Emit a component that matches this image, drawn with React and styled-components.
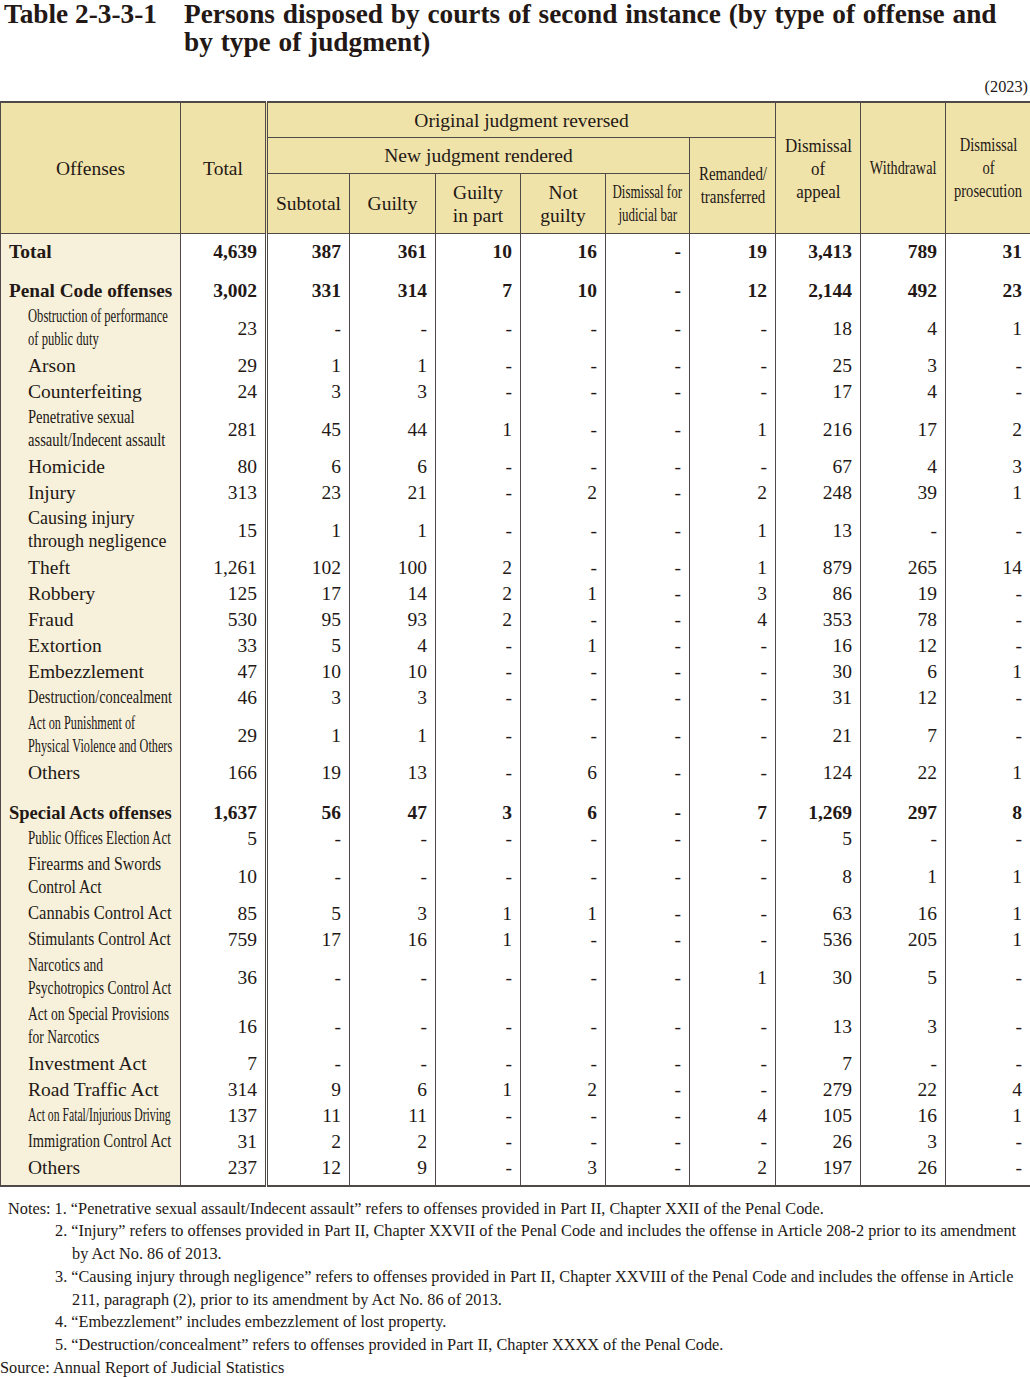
import React from 'react';
import styled, { createGlobalStyle } from 'styled-components';

const GlobalStyle = createGlobalStyle`
  html, body {
    margin: 0;
    padding: 0;
    background: #fff;
  }
  body {
    font-family: "Liberation Serif", "Times New Roman", serif;
    color: #231815;
  }
`;

const LINE = '#4f4a47';

const Page = styled.div`
  width: 1030px;
`;

const TitleRow = styled.div`
  display: flex;
  font-size: 27.3px;
  font-weight: bold;
  line-height: 28px;
  word-spacing: 1px;
  white-space: nowrap;
`;

const TitleNo = styled.div`
  width: 184px;
  flex-shrink: 0;
  padding-left: 4px;
  box-sizing: border-box;
  word-spacing: 0;
`;

const Year = styled.div`
  text-align: right;
  font-size: 16.3px;
  line-height: 20px;
  padding: 21px 2px 0 0;
  margin-bottom: 4px;
`;

const Grid = styled.table`
  width: 1030px;
  border-collapse: collapse;
  table-layout: fixed;
  font-size: 19.5px;
  border-top: 2px solid ${LINE};
  border-bottom: 2px solid ${LINE};
`;

const Head = styled.th`
  background: #f0e3aa;
  border: 1px solid ${LINE};
  border-right: ${p => (p.$double ? `3px double ${LINE}` : `1px solid ${LINE}`)};
  font-weight: normal;
  padding: 0;
  height: ${p => (p.$h ? `${p.$h}px` : 'auto')};
  vertical-align: middle;
  overflow: visible;
`;

const HeadText = styled.div`
  display: flex;
  flex-direction: column;
  align-items: center;
  line-height: 23px;
`;

const Squeeze = styled.span`
  display: block;
  white-space: nowrap;
  font-size: ${p => p.$fs || 19.5}px;
  transform: scaleX(${p => p.$sx || 1});
  transform-origin: center center;
`;

const BodyRow = styled.tr`
  height: ${p => p.$h}px;
`;

const NameCell = styled.td`
  background: #f7f1db;
  border-left: 1px solid ${LINE};
  border-right: 1px solid ${LINE};
  padding: ${p => p.$pt || 0}px 0 ${p => p.$pb || 0}px ${p => (p.$bold ? 8 : 27)}px;
  font-weight: ${p => (p.$bold ? 'bold' : 'normal')};
  vertical-align: middle;
  line-height: 23px;
  overflow: visible;
`;

const Label = styled.div`
  width: max-content;
  white-space: nowrap;
  font-size: ${p => p.$fs || 19.5}px;
  transform: scaleX(${p => p.$sx || 1});
  transform-origin: left center;
`;

const NumCell = styled.td`
  text-align: right;
  border-left: 1px solid ${LINE};
  border-right: ${p => (p.$double ? `3px double ${LINE}` : `1px solid ${LINE}`)};
  padding: ${p => p.$pt || 0}px 8px ${p => p.$pb || 0}px 0;
  font-weight: ${p => (p.$bold ? 'bold' : 'normal')};
  vertical-align: middle;
  line-height: 23px;
`;

const Notes = styled.div`
  margin-top: 11px;
  font-size: 16.3px;
  line-height: 22.8px;
`;

const NoteLine = styled.div`
  white-space: nowrap;
  padding-left: ${p => p.$indent || 0}px;
`;

const widths = [180, 86, 83, 86, 85, 85, 84, 86, 85, 85, 85];

const S = 26;
const D = 49;

const rows = [
  { name: ['Total'], bold: true, h: 36, v: ['4,639', '387', '361', '10', '16', '-', '19', '3,413', '789', '31'] },
  { name: ['Penal Code offenses'], bold: true, sx: 0.985, h: 34, pt: 8, v: ['3,002', '331', '314', '7', '10', '-', '12', '2,144', '492', '23'] },
  { name: ['Obstruction of performance', 'of public duty'], fs: 18, sx: 0.7, h: D, v: ['23', '-', '-', '-', '-', '-', '-', '18', '4', '1'] },
  { name: ['Arson'], h: S, v: ['29', '1', '1', '-', '-', '-', '-', '25', '3', '-'] },
  { name: ['Counterfeiting'], h: S, v: ['24', '3', '3', '-', '-', '-', '-', '17', '4', '-'] },
  { name: ['Penetrative sexual', 'assault/Indecent assault'], fs: 18, sx: 0.81, h: D, v: ['281', '45', '44', '1', '-', '-', '1', '216', '17', '2'] },
  { name: ['Homicide'], h: S, v: ['80', '6', '6', '-', '-', '-', '-', '67', '4', '3'] },
  { name: ['Injury'], h: S, v: ['313', '23', '21', '-', '2', '-', '2', '248', '39', '1'] },
  { name: ['Causing injury', 'through negligence'], fs: 18, h: D, v: ['15', '1', '1', '-', '-', '-', '1', '13', '-', '-'] },
  { name: ['Theft'], h: S, v: ['1,261', '102', '100', '2', '-', '-', '1', '879', '265', '14'] },
  { name: ['Robbery'], h: S, v: ['125', '17', '14', '2', '1', '-', '3', '86', '19', '-'] },
  { name: ['Fraud'], h: S, v: ['530', '95', '93', '2', '-', '-', '4', '353', '78', '-'] },
  { name: ['Extortion'], h: S, v: ['33', '5', '4', '-', '1', '-', '-', '16', '12', '-'] },
  { name: ['Embezzlement'], h: S, v: ['47', '10', '10', '-', '-', '-', '-', '30', '6', '1'] },
  { name: ['Destruction/concealment'], fs: 18, sx: 0.8, h: S, v: ['46', '3', '3', '-', '-', '-', '-', '31', '12', '-'] },
  { name: ['Act on Punishment of', 'Physical Violence and Others'], fs: 18, sx: 0.68, h: D, v: ['29', '1', '1', '-', '-', '-', '-', '21', '7', '-'] },
  { name: ['Others'], h: S, v: ['166', '19', '13', '-', '6', '-', '-', '124', '22', '1'] },
  { name: ['Special Acts offenses'], bold: true, sx: 0.95, h: 40, pt: 14, v: ['1,637', '56', '47', '3', '6', '-', '7', '1,269', '297', '8'] },
  { name: ['Public Offices Election Act'], fs: 18, sx: 0.725, h: S, v: ['5', '-', '-', '-', '-', '-', '-', '5', '-', '-'] },
  { name: ['Firearms and Swords', 'Control Act'], fs: 18, sx: 0.87, h: D, v: ['10', '-', '-', '-', '-', '-', '-', '8', '1', '1'] },
  { name: ['Cannabis Control Act'], fs: 18, sx: 0.92, h: S, v: ['85', '5', '3', '1', '1', '-', '-', '63', '16', '1'] },
  { name: ['Stimulants Control Act'], fs: 18, sx: 0.86, h: S, v: ['759', '17', '16', '1', '-', '-', '-', '536', '205', '1'] },
  { name: ['Narcotics and', 'Psychotropics Control Act'], fs: 18, sx: 0.754, h: D, v: ['36', '-', '-', '-', '-', '-', '1', '30', '5', '-'] },
  { name: ['Act on Special Provisions', 'for Narcotics'], fs: 18, sx: 0.756, h: D, v: ['16', '-', '-', '-', '-', '-', '-', '13', '3', '-'] },
  { name: ['Investment Act'], h: S, v: ['7', '-', '-', '-', '-', '-', '-', '7', '-', '-'] },
  { name: ['Road Traffic Act'], h: S, v: ['314', '9', '6', '1', '2', '-', '-', '279', '22', '4'] },
  { name: ['Act on Fatal/Injurious Driving'], fs: 18, sx: 0.65, h: S, v: ['137', '11', '11', '-', '-', '-', '4', '105', '16', '1'] },
  { name: ['Immigration Control Act'], fs: 18, sx: 0.8, h: S, v: ['31', '2', '2', '-', '-', '-', '-', '26', '3', '-'] },
  { name: ['Others'], h: 31, pb: 5, v: ['237', '12', '9', '-', '3', '-', '2', '197', '26', '-'] },
];

const HeadLabel = ({ lines, fs, sx }) => (
  <HeadText>
    {lines.map(l => (
      <Squeeze key={l} $fs={fs} $sx={sx}>{l}</Squeeze>
    ))}
  </HeadText>
);

const App = () => {
  return (
    <Page>
      <GlobalStyle />
      <TitleRow>
        <TitleNo>Table 2-3-3-1</TitleNo>
        <div>
          Persons disposed by courts of second instance (by type of offense and
          <br />
          by type of judgment)
        </div>
      </TitleRow>
      <Year>(2023)</Year>

      <Grid>
        <colgroup>
          {widths.map((w, i) => (
            <col key={i} style={{ width: w }} />
          ))}
        </colgroup>
        <thead>
          <tr>
            <Head rowSpan={3}><HeadLabel lines={['Offenses']} /></Head>
            <Head rowSpan={3} $double><HeadLabel lines={['Total']} /></Head>
            <Head colSpan={6} $h={34}><HeadLabel lines={['Original judgment reversed']} /></Head>
            <Head rowSpan={3}><HeadLabel lines={['Dismissal', 'of', 'appeal']} sx={0.87} /></Head>
            <Head rowSpan={3}><HeadLabel lines={['Withdrawal']} fs={18} sx={0.79} /></Head>
            <Head rowSpan={3}><HeadLabel lines={['Dismissal', 'of', 'prosecution']} fs={18} sx={0.81} /></Head>
          </tr>
          <tr>
            <Head colSpan={5} $h={35}><HeadLabel lines={['New judgment rendered']} /></Head>
            <Head rowSpan={2}><HeadLabel lines={['Remanded/', 'transferred']} fs={18} sx={0.83} /></Head>
          </tr>
          <tr>
            <Head $h={59}><HeadLabel lines={['Subtotal']} /></Head>
            <Head><HeadLabel lines={['Guilty']} /></Head>
            <Head><HeadLabel lines={['Guilty', 'in part']} /></Head>
            <Head><HeadLabel lines={['Not', 'guilty']} /></Head>
            <Head><HeadLabel lines={['Dismissal for', 'judicial bar']} fs={18} sx={0.72} /></Head>
          </tr>
        </thead>
        <tbody>
          {rows.map((r, i) => (
            <BodyRow key={i} $h={r.h}>
              <NameCell $bold={r.bold} $pt={r.pt} $pb={r.pb}>
                <Label $fs={r.fs} $sx={r.sx}>
                  {r.name.map((l, j) => (
                    <React.Fragment key={j}>
                      {j > 0 && <br />}
                      {l}
                    </React.Fragment>
                  ))}
                </Label>
              </NameCell>
              {r.v.map((n, j) => (
                <NumCell key={j} $bold={r.bold} $pt={r.pt} $pb={r.pb} $double={j === 0}>
                  {n}
                </NumCell>
              ))}
            </BodyRow>
          ))}
        </tbody>
      </Grid>

      <Notes>
        <NoteLine $indent={8}>
          Notes: 1. “Penetrative sexual assault/Indecent assault” refers to offenses provided in Part II, Chapter XXII of the Penal Code.
        </NoteLine>
        <NoteLine $indent={55}>
          2. “Injury” refers to offenses provided in Part II, Chapter XXVII of the Penal Code and includes the offense in Article 208-2 prior to its amendment
        </NoteLine>
        <NoteLine $indent={72}>by Act No. 86 of 2013.</NoteLine>
        <NoteLine $indent={55}>
          3. “Causing injury through negligence” refers to offenses provided in Part II, Chapter XXVIII of the Penal Code and includes the offense in Article
        </NoteLine>
        <NoteLine $indent={72}>211, paragraph (2), prior to its amendment by Act No. 86 of 2013.</NoteLine>
        <NoteLine $indent={55}>4. “Embezzlement” includes embezzlement of lost property.</NoteLine>
        <NoteLine $indent={55}>
          5. “Destruction/concealment” refers to offenses provided in Part II, Chapter XXXX of the Penal Code.
        </NoteLine>
        <NoteLine>Source: Annual Report of Judicial Statistics</NoteLine>
      </Notes>
    </Page>
  );
};

export default App;
